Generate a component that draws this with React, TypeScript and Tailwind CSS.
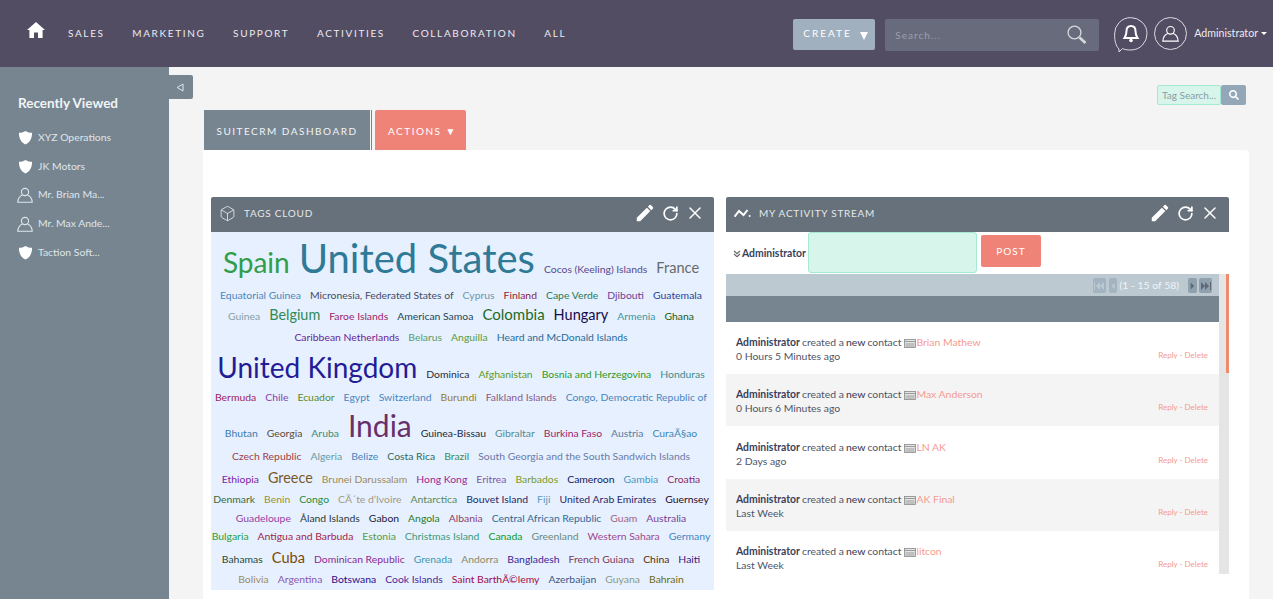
import { Box, RotateCw, X } from 'lucide-react';
import { MdEdit } from 'react-icons/md';
import { FaSearch } from 'react-icons/fa';

type Tag = [string, string, string];
type TagRow = { h: string; tags: Tag[] };

const nav = ['SALES', 'MARKETING', 'SUPPORT', 'ACTIVITIES', 'COLLABORATION', 'ALL'];

const recent = [
  { name: 'XYZ Operations', icon: 'shield' },
  { name: 'JK Motors', icon: 'shield' },
  { name: 'Mr. Brian Ma...', icon: 'user' },
  { name: 'Mr. Max Ande...', icon: 'user' },
  { name: 'Taction Soft...', icon: 'shield' },
];

const small = 'text-[10.4px]';

const tagRows: TagRow[] = [
  {
    h: 'h-[46px]',
    tags: [
      ['Spain', 'text-[28px]', 'text-[#2f9e4a]'],
      ['United States', 'text-[40px]', 'text-[#2f7a96]'],
      ['Cocos (Keeling) Islands', small, 'text-[#5a4a8c]'],
      ['France', 'text-[14.6px]', 'text-[#6a6a6a]'],
    ],
  },
  {
    h: 'h-[22px]',
    tags: [
      ['Equatorial Guinea', small, 'text-[#4a86c0]'],
      ['Micronesia, Federated States of', small, 'text-[#444c66]'],
      ['Cyprus', small, 'text-[#6f95a8]'],
      ['Finland', small, 'text-[#8c1d3c]'],
      ['Cape Verde', small, 'text-[#1f7a5a]'],
      ['Djibouti', small, 'text-[#6a3f96]'],
      ['Guatemala', small, 'text-[#2a3f96]'],
    ],
  },
  {
    h: 'h-[22px]',
    tags: [
      ['Guinea', small, 'text-[#86a0a8]'],
      ['Belgium', 'text-[14.4px]', 'text-[#2f8a5a]'],
      ['Faroe Islands', small, 'text-[#9c1f6a]'],
      ['American Samoa', small, 'text-[#25465a]'],
      ['Colombia', 'text-[15px]', 'text-[#1f6a1f]'],
      ['Hungary', 'text-[14.5px]', 'text-[#160a4a]'],
      ['Armenia', small, 'text-[#3f96a0]'],
      ['Ghana', small, 'text-[#255a10]'],
    ],
  },
  {
    h: 'h-[20px]',
    tags: [
      ['Caribbean Netherlands', small, 'text-[#6a1f96]'],
      ['Belarus', small, 'text-[#5a9a6a]'],
      ['Anguilla', small, 'text-[#5a9a3a]'],
      ['Heard and McDonald Islands', small, 'text-[#2a6a9a]'],
    ],
  },
  {
    h: 'h-[39px]',
    tags: [
      ['United Kingdom', 'text-[28px]', 'text-[#241c96]'],
      ['Dominica', small, 'text-[#2a2a3a]'],
      ['Afghanistan', small, 'text-[#5a9a2a]'],
      ['Bosnia and Herzegovina', small, 'text-[#2a9a2a]'],
      ['Honduras', small, 'text-[#3f8a8a]'],
    ],
  },
  {
    h: 'h-[21px]',
    tags: [
      ['Bermuda', small, 'text-[#9c1f5a]'],
      ['Chile', small, 'text-[#8a3fb0]'],
      ['Ecuador', small, 'text-[#5a8a2a]'],
      ['Egypt', small, 'text-[#4a86c0]'],
      ['Switzerland', small, 'text-[#4a86c0]'],
      ['Burundi', small, 'text-[#9a7a2a]'],
      ['Falkland Islands', small, 'text-[#8a5a8a]'],
      ['Congo, Democratic Republic of', small, 'text-[#4a86c0]'],
    ],
  },
  {
    h: 'h-[38px]',
    tags: [
      ['Bhutan', small, 'text-[#3f7ab0]'],
      ['Georgia', small, 'text-[#5a4a3a]'],
      ['Aruba', small, 'text-[#3f8a7a]'],
      ['India', 'text-[30px]', 'text-[#6a2f6a]'],
      ['Guinea-Bissau', small, 'text-[#1a2a3a]'],
      ['Gibraltar', small, 'text-[#5a8a8a]'],
      ['Burkina Faso', small, 'text-[#a01f6a]'],
      ['Austria', small, 'text-[#5a7aa0]'],
      ['CuraÃ§ao', small, 'text-[#3f86b0]'],
    ],
  },
  {
    h: 'h-[21px]',
    tags: [
      ['Czech Republic', small, 'text-[#a03f4a]'],
      ['Algeria', small, 'text-[#6a9aa0]'],
      ['Belize', small, 'text-[#3f86c0]'],
      ['Costa Rica', small, 'text-[#2f6a5a]'],
      ['Brazil', small, 'text-[#3f8a5a]'],
      ['South Georgia and the South Sandwich Islands', small, 'text-[#6a7aa8]'],
    ],
  },
  {
    h: 'h-[24px]',
    tags: [
      ['Ethiopia', small, 'text-[#7a1fa0]'],
      ['Greece', 'text-[14.4px]', 'text-[#7a5a2a]'],
      ['Brunei Darussalam', small, 'text-[#a08a5a]'],
      ['Hong Kong', small, 'text-[#a01f96]'],
      ['Eritrea', small, 'text-[#7a5aa8]'],
      ['Barbados', small, 'text-[#7a9a2a]'],
      ['Cameroon', small, 'text-[#101a5a]'],
      ['Gambia', small, 'text-[#4a96c0]'],
      ['Croatia', small, 'text-[#8a2a6a]'],
    ],
  },
  {
    h: 'h-[19px]',
    tags: [
      ['Denmark', small, 'text-[#3a6a3a]'],
      ['Benin', small, 'text-[#a0902a]'],
      ['Congo', small, 'text-[#1f8a3a]'],
      ['CÃ´te d’Ivoire', small, 'text-[#a09a86]'],
      ['Antarctica', small, 'text-[#5a8a5a]'],
      ['Bouvet Island', small, 'text-[#1a2a6a]'],
      ['Fiji', small, 'text-[#5a9ac0]'],
      ['United Arab Emirates', small, 'text-[#2a2a6a]'],
      ['Guernsey', small, 'text-[#2a0a2a]'],
    ],
  },
  {
    h: 'h-[19px]',
    tags: [
      ['Guadeloupe', small, 'text-[#963fa0]'],
      ['Åland Islands', small, 'text-[#2a3a3a]'],
      ['Gabon', small, 'text-[#1a1a3a]'],
      ['Angola', small, 'text-[#2a7a1a]'],
      ['Albania', small, 'text-[#8a3f6a]'],
      ['Central African Republic', small, 'text-[#2f6a96]'],
      ['Guam', small, 'text-[#a0608a]'],
      ['Australia', small, 'text-[#7a3f96]'],
    ],
  },
  {
    h: 'h-[18px]',
    tags: [
      ['Bulgaria', small, 'text-[#1fa03a]'],
      ['Antigua and Barbuda', small, 'text-[#a01f4a]'],
      ['Estonia', small, 'text-[#5a9a3a]'],
      ['Christmas Island', small, 'text-[#3a9a7a]'],
      ['Canada', small, 'text-[#0a9a1a]'],
      ['Greenland', small, 'text-[#6a8a7a]'],
      ['Western Sahara', small, 'text-[#a04a8a]'],
      ['Germany', small, 'text-[#3f86c0]'],
    ],
  },
  {
    h: 'h-[25px]',
    tags: [
      ['Bahamas', small, 'text-[#1f4a3a]'],
      ['Cuba', 'text-[14.6px]', 'text-[#7a4a0a]'],
      ['Dominican Republic', small, 'text-[#8a2a96]'],
      ['Grenada', small, 'text-[#3f96b0]'],
      ['Andorra', small, 'text-[#8a8a6a]'],
      ['Bangladesh', small, 'text-[#3a1f96]'],
      ['French Guiana', small, 'text-[#7a3a5a]'],
      ['China', small, 'text-[#5a2a0a]'],
      ['Haiti', small, 'text-[#3a1a7a]'],
    ],
  },
  {
    h: 'h-[18px]',
    tags: [
      ['Bolivia', small, 'text-[#a08a5a]'],
      ['Argentina', small, 'text-[#8a5ab0]'],
      ['Botswana', small, 'text-[#2a0a8a]'],
      ['Cook Islands', small, 'text-[#4a1fa0]'],
      ['Saint BarthÃ©lemy', small, 'text-[#a00a4a]'],
      ['Azerbaijan', small, 'text-[#3a5a8a]'],
      ['Guyana', small, 'text-[#8a9a8a]'],
      ['Bahrain', small, 'text-[#6a6a1a]'],
    ],
  },
];

const activities = [
  { name: 'Brian Mathew', time: '0 Hours 5 Minutes ago', bg: 'bg-white', box: 'h-[52px] pt-[13px]' },
  { name: 'Max Anderson', time: '0 Hours 6 Minutes ago', bg: 'bg-[#f4f4f4]', box: 'h-[52px] pt-[13px]' },
  { name: 'LN AK', time: '2 Days ago', bg: 'bg-white', box: 'h-[53px] pt-[14px]' },
  { name: 'AK Final', time: 'Last Week', bg: 'bg-[#f4f4f4]', box: 'h-[52px] pt-[13px]' },
  { name: 'litcon', time: 'Last Week', bg: 'bg-white', box: 'h-[52px] pt-[13px]' },
];

const ShieldIcon = () => (
  <svg viewBox="0 0 16 16" className="w-[15px] h-[15px] fill-white">
    <path d="M8 1 C10 2.4 12.6 3 15 3 C15 9 13 13 8 15.5 C3 13 1 9 1 3 C3.4 3 6 2.4 8 1 Z" />
  </svg>
);

const UserIcon = ({ className }: { className: string }) => (
  <svg viewBox="0 0 16 16" className={className} fill="none" stroke="currentColor" strokeWidth="1.1">
    <circle cx="8" cy="5" r="3.6" />
    <path d="M5.4 8 C3 9 1 11 .8 15.2 H15.2 C15 11 13 9 10.6 8" />
  </svg>
);

const DashletHeader = ({ title, icon }: { title: string; icon: React.ReactNode }) => (
  <div className="h-[35px] bg-[#66717c] rounded-t-[2px] flex items-center pl-[8px] pr-[9px] pb-[3px] text-white">
    <span className="w-[17px] flex justify-center">{icon}</span>
    <span className="ml-[8px] text-[10px] tracking-[0.75px] text-[#e4e8ea]">{title}</span>
    <MdEdit className="ml-auto w-[22px] h-[22px]" />
    <RotateCw className="ml-[6px] w-[17px] h-[17px]" strokeWidth={2.4} />
    <X className="ml-[6px] w-[20px] h-[20px]" strokeWidth={1.8} />
  </div>
);

const PagerButton = ({ w, tone, glyph }: { w: string; tone: string; glyph: string }) => (
  <span className={`${w} ${tone} h-[15px] rounded-[2px] flex items-center justify-center`}>
    <svg viewBox="0 0 10 8" className="w-[10px] h-[8px]" fill="currentColor">
      <path d={glyph} />
    </svg>
  </span>
);

export default function App() {
  return (
    <div className="h-screen overflow-hidden flex flex-col bg-[#f4f4f4] font-['Lato',sans-serif]">
      <header className="h-[67px] shrink-0 bg-[#534d64] flex items-start text-white">
        <svg viewBox="0 0 18 16" className="w-[18px] h-[16px] mt-[22px] ml-[27px] fill-white">
          <path d="M9 0 L18 8 L15.6 8 L15.6 16 L11 16 L11 10.5 L7 10.5 L7 16 L2.4 16 L2.4 8 L0 8 Z" />
        </svg>
        <nav className="ml-[23px] mt-[26px] flex gap-[27.6px] text-[10px] leading-[15px] tracking-[1.65px] text-[#eceaf0]">
          {nav.map((item) => (
            <span key={item}>{item}</span>
          ))}
        </nav>
        <div className="ml-auto mt-[19px] w-[82px] h-[31px] rounded-[2px] bg-[#a0b0be] flex items-center pl-[10px] text-[10px] tracking-[2px]">
          <span className="-mt-[2px]">CREATE</span>
          <span className="ml-[8px] mt-[3px] w-0 h-0 border-x-[4.5px] border-x-transparent border-t-[8px] border-t-white" />
        </div>
        <div className="ml-[10px] mt-[19px] w-[214px] h-[32px] rounded-[2px] bg-[#686b7b] flex items-center pl-[10px] pr-[12px]">
          <span className="text-[10px] tracking-[1px] text-[#9d9fac]">Search...</span>
          <svg viewBox="0 0 20 20" className="ml-auto w-[20px] h-[20px]" fill="none" stroke="#d8d9df">
            <circle cx="7.5" cy="7.5" r="6.4" strokeWidth="1.3" />
            <path d="M12.5 12.5 L18.5 18" strokeWidth="2.6" />
          </svg>
        </div>
        <svg viewBox="0 0 34 36" className="ml-[15px] mt-[17px] w-[34px] h-[36px]" fill="none" stroke="#dcdbe2" strokeWidth="1">
          <path d="M5 32 C2 29 .6 25 .6 17 A16.2 16.2 0 1 1 17 33 C13 33 10 32.5 8.5 31.5 L5 35 Z" />
          <path d="M17 9 C13.5 9 12.5 11.5 12.5 14 C12.5 18 11.5 19.5 10.5 21 H23.5 C22.5 19.5 21.5 18 21.5 14 C21.5 11.5 20.5 9 17 9 Z" stroke="#fff" strokeWidth="2" />
          <circle cx="17" cy="23.5" r="1.8" fill="#fff" stroke="none" />
        </svg>
        <div className="ml-[6px] mt-[17px] w-[33px] h-[33px] rounded-full border border-[#dcdbe2] flex items-center justify-center text-white">
          <UserIcon className="w-[17px] h-[17px]" />
        </div>
        <div className="ml-[7px] mt-[26px] mr-[6px] flex items-center text-[10.6px] leading-[15px] text-[#eceaf0]">
          Administrator
          <span className="ml-[3px] w-0 h-0 border-x-[3px] border-x-transparent border-t-[3px] border-t-white" />
        </div>
      </header>

      <div className="flex flex-1 min-h-0">
        <aside className="w-[169px] shrink-0 bg-[#778591] pl-[18px] pt-[27px] text-white relative">
          <h2 className="text-[13.5px] leading-[18px] font-bold text-[#f1f4f5]">Recently Viewed</h2>
          <ul className="mt-[18.4px] flex flex-col gap-[13.7px]">
            {recent.map((item) => (
              <li key={item.name} className="flex items-center h-[15px] text-[10.4px] text-[#dfe6ea]">
                <span className="w-[20px] shrink-0">
                  {item.icon === 'shield' ? <ShieldIcon /> : <UserIcon className="w-[16px] h-[16px] -ml-px" />}
                </span>
                {item.name}
              </li>
            ))}
          </ul>
          <div className="absolute left-[169px] top-[8px] w-[24px] h-[24px] bg-[#778591] rounded-r-[2px] flex items-center pl-[7px]">
            <svg viewBox="0 0 8 9" className="w-[8px] h-[9px]" fill="none" stroke="#e4e8ea">
              <path d="M7 1 L1.2 4.5 L7 8 Z" />
            </svg>
          </div>
        </aside>

        <main className="flex-1 min-w-0 pl-[34px] pr-[24px] pt-[18px]">
          <div className="flex justify-end h-[20px] -mr-[-3px]">
            <div className="w-[64px] h-[20px] rounded-[2px] border border-[#a5e8d3] bg-[#d8f5ec] pl-[4px] text-[10px] leading-[18px] text-[#8b9ba3] whitespace-nowrap overflow-hidden">
              Tag Search...
            </div>
            <div className="w-[25px] h-[20px] rounded-[2px] bg-[#94a7b8] flex items-center justify-center">
              <FaSearch className="w-[10px] h-[10px] text-white" />
            </div>
          </div>

          <div className="mt-[5px] flex h-[40px] pl-px">
            <div className="w-[166px] bg-[#778591] flex items-center justify-center pt-[2px] text-[10px] tracking-[1.5px] text-[#f1f4f5]">
              SUITECRM DASHBOARD
            </div>
            <div className="ml-px w-px bg-[#778591]" />
            <div className="ml-[3px] w-[91px] rounded-t-[2px] bg-[#f08377] flex items-center justify-center pt-[2px] pl-[4px] text-[10px] tracking-[1.5px] text-white">
              ACTIONS ▼
            </div>
          </div>

          <div className="bg-white rounded-[4px] rounded-tl-none pt-[47px] pl-[8px] pr-[20px] h-[600px]">
            <div className="grid grid-cols-2 gap-[12px]">
              <section>
                <DashletHeader title="TAGS CLOUD" icon={<Box className="w-[17px] h-[17px] text-[#e4e8ea]" strokeWidth={1.2} />} />
                <div className="bg-[#e6f0fe] h-[358px] pr-[3px]">
                  {tagRows.map((row, i) => (
                    <div key={i} className={`${row.h} flex items-end justify-center`}>
                      <div className="flex items-baseline justify-center gap-[9px] whitespace-nowrap">
                        {row.tags.map(([text, size, color]) => (
                          <span key={text} className={`${size} ${color} leading-none`}>
                            {text}
                          </span>
                        ))}
                      </div>
                    </div>
                  ))}
                </div>
              </section>

              <section>
                <DashletHeader
                  title="MY ACTIVITY STREAM"
                  icon={
                    <svg viewBox="0 0 17 10" className="w-[17px] h-[10px]" fill="none" stroke="#fff" strokeWidth="2">
                      <path d="M.6 8.6 L5 3 L9.5 7 L13.5 2" />
                      <circle cx="15.6" cy="8" r="1" fill="#fff" stroke="none" />
                    </svg>
                  }
                />
                <div className="h-[42px] flex">
                  <div className="w-[82px] pl-[7px] pt-[15px] flex items-start text-[10.4px] leading-[13px] font-bold text-[#3a3f5a] whitespace-nowrap">
                    <svg viewBox="0 0 8 8" className="w-[8px] h-[8px] mt-[3px] mr-px" fill="none" stroke="#666" strokeWidth="1.2">
                      <path d="M1 1 L4 3.6 L7 1 M1 4 L4 6.8 L7 4" />
                    </svg>
                    Administrator
                  </div>
                  <div className="w-[169px] h-[41px] rounded-[3px] border border-[#a5e8d3] bg-[#d8f5ec]" />
                  <div className="ml-[4px] mt-[3px] w-[60px] h-[32px] rounded-[2px] bg-[#f08377] flex items-center justify-center text-[10px] tracking-[1px] text-white">
                    POST
                  </div>
                </div>
                <div className="flex h-[300px] overflow-hidden">
                  <div className="w-[493px] shrink-0">
                    <div className="h-[22px] bg-[#bdc9d1] flex items-center justify-end pr-[7px] pt-px">
                      <PagerButton w="w-[13px]" tone="bg-[#a3b3c1] text-[#bcc8d2]" glyph="M10 0 V8 L6 4 Z M6 0 V8 L2 4 Z M0 0 H1 V8 H0 Z" />
                      <PagerButton w="w-[8px] ml-[3px]" tone="bg-[#a3b3c1] text-[#bcc8d2]" glyph="M7 0 V8 L3 4 Z" />
                      <span className="ml-[3px] mr-[9px] text-[10.4px] text-[#f1f4f6]">(1 - 15 of 58)</span>
                      <PagerButton w="w-[9px]" tone="bg-[#8fa0ae] text-[#5f6a76]" glyph="M3 0 V8 L7 4 Z" />
                      <PagerButton w="w-[13px] ml-[2px]" tone="bg-[#8fa0ae] text-[#5f6a76]" glyph="M0 0 V8 L4 4 Z M4 0 V8 L8 4 Z M9 0 H10 V8 H9 Z" />
                    </div>
                    <div className="h-[26px] bg-[#778591]" />
                    {activities.map((row) => (
                      <div key={row.name} className={`${row.box} ${row.bg} shrink-0 pl-[10px] pr-[11px] flex justify-between`}>
                        <div className="text-[10.4px] leading-[14px] text-[#4d5468]">
                          <div className="flex items-center whitespace-nowrap">
                            <b className="text-[#3a3f5a]">Administrator</b>
                            <span className="ml-[2px]">created a</span>
                            <b className="ml-[2px] font-medium text-[#3a3f5a]">new</b>
                            <span className="ml-[2px]">contact</span>
                            <svg viewBox="0 0 12 10" className="ml-[3px] w-[12px] h-[10px] mt-[2px]" fill="#e4e4e4" stroke="#888" strokeWidth=".8">
                              <rect x=".5" y="1.5" width="11" height="8" />
                              <path d="M.5 3.5 H11.5 M1.5 6 H10.5 M1.5 8 H10.5" fill="none" />
                            </svg>
                            <span className="text-[#f59a90]">{row.name}</span>
                          </div>
                          <div>{row.time}</div>
                        </div>
                        <div className="self-start mt-[15px] text-[8px] leading-[11px] text-[#f59a90] whitespace-nowrap">
                          Reply - Delete
                        </div>
                      </div>
                    ))}
                  </div>
                  <div className="w-[10px] bg-[#e5e5e5] flex justify-end">
                    <div className="w-[3px] h-[99px] bg-[#f08a6c]" />
                  </div>
                </div>
              </section>
            </div>
          </div>
        </main>
      </div>
    </div>
  );
}
